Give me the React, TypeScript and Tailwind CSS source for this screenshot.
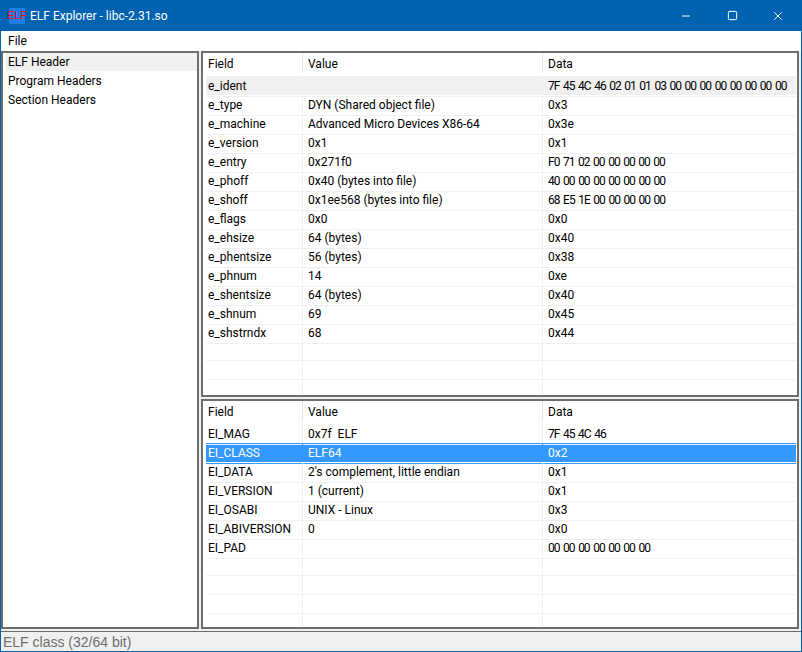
import { Minus, Square, X } from 'lucide-react'

const FONT = "font-['Roboto','Noto_Sans',sans-serif]"

type Row = [string, string, string]

const headerRows: Row[] = [
	['e_ident', '', '7F 45 4C 46 02 01 01 03 00 00 00 00 00 00 00 00'],
	['e_type', 'DYN (Shared object file)', '0x3'],
	['e_machine', 'Advanced Micro Devices X86-64', '0x3e'],
	['e_version', '0x1', '0x1'],
	['e_entry', '0x271f0', 'F0 71 02 00 00 00 00 00'],
	['e_phoff', '0x40 (bytes into file)', '40 00 00 00 00 00 00 00'],
	['e_shoff', '0x1ee568 (bytes into file)', '68 E5 1E 00 00 00 00 00'],
	['e_flags', '0x0', '0x0'],
	['e_ehsize', '64 (bytes)', '0x40'],
	['e_phentsize', '56 (bytes)', '0x38'],
	['e_phnum', '14', '0xe'],
	['e_shentsize', '64 (bytes)', '0x40'],
	['e_shnum', '69', '0x45'],
	['e_shstrndx', '68', '0x44'],
	['', '', ''],
	['', '', ''],
	['', '', ''],
]

const identRows: Row[] = [
	['EI_MAG', '0x7f  ELF', '7F 45 4C 46'],
	['EI_CLASS', 'ELF64', '0x2'],
	['EI_DATA', "2's complement, little endian", '0x1'],
	['EI_VERSION', '1 (current)', '0x1'],
	['EI_OSABI', 'UNIX - Linux', '0x3'],
	['EI_ABIVERSION', '0', '0x0'],
	['EI_PAD', '', '00 00 00 00 00 00 00'],
	['', '', ''],
	['', '', ''],
	['', '', ''],
	['', '', ''],
]

const DataTable = ({
	rows,
	hovered,
	selected,
	className,
}: {
	rows: Row[]
	hovered?: number
	selected?: number
	className: string
}) => (
	<div className={`overflow-hidden border-2 border-[#6e6e6e] bg-white pl-[3px] pr-[1px] ${className}`}>
		<div className="grid h-[23px] grid-cols-[97px_240px_minmax(0,1fr)] pb-[1px] text-black">
			<div className="h-[20px] border-r border-[#e5e5e5] pl-[2px] leading-[22px]">Field</div>
			<div className="h-[20px] border-r border-[#e5e5e5] pl-[5px] leading-[22px]">Value</div>
			<div className="h-[20px] pl-[5px] leading-[22px]">Data</div>
		</div>
		{rows.map((row, i) => {
			const isSelected = i === selected
			const rowColor = isSelected
				? 'bg-[#3399ff] text-white'
				: i === hovered
					? 'bg-[#f0f0f0] text-black'
					: 'text-black'
			const cellBorder = isSelected ? 'border-[#3399ff]' : 'border-[#f0f0f0]'
			// byte dumps: Roboto digits run wider than the original's
			const hexSpacing = row[2].includes(' ') ? 'tracking-[-1px] [word-spacing:1.6px]' : ''
			return (
				<div key={i} className={`grid h-[19px] grid-cols-[97px_240px_minmax(0,1fr)] ${rowColor}`}>
					<div className={`whitespace-nowrap border-r border-b pl-[2px] leading-[20px] ${cellBorder}`}>{row[0]}</div>
					<div className={`whitespace-pre border-r border-b pl-[5px] leading-[20px] ${cellBorder}`}>{row[1]}</div>
					<div className={`whitespace-nowrap border-b pl-[5px] leading-[20px] ${hexSpacing} ${cellBorder}`}>{row[2]}</div>
				</div>
			)
		})}
	</div>
)

export default function App() {
	return (
		<div className={`flex h-[652px] w-[802px] flex-col overflow-hidden border-x border-b border-[#0063b1] bg-[#f0f0f0] text-[12px] ${FONT}`}>
			<div className="flex h-[31px] shrink-0 items-center bg-[#0063b1] text-white">
				<div className="ml-[8px] flex h-[16px] w-[16px] items-center justify-center rounded-[1px] bg-[#1e7fe8] font-['Liberation_Sans',sans-serif] text-[11px] leading-none text-[#ff0000]">
					ELF
				</div>
				<span className="ml-[5px] text-[12px]">ELF Explorer - libc-2.31.so</span>
				<div className="ml-auto flex items-center">
					<div className="flex w-[46px] justify-center">
						<Minus size={12} strokeWidth={1} absoluteStrokeWidth />
					</div>
					<div className="flex w-[46px] justify-center">
						<Square size={11} strokeWidth={1} absoluteStrokeWidth />
					</div>
					<div className="flex w-[46px] justify-center pr-[1px]">
						<X size={14} strokeWidth={1} absoluteStrokeWidth />
					</div>
				</div>
			</div>
			<div className="flex h-[20px] shrink-0 items-center bg-white pl-[7px] text-black">File</div>
			<div className="flex h-[578px] shrink-0 gap-[2px] pr-[2px]">
				<div className="w-[198px] shrink-0 border-2 border-[#6e6e6e] bg-white pl-[3px] text-black">
					<div className="mb-[1px] h-[18px] bg-[#f0f0f0] pl-[2px] leading-[18px]">ELF Header</div>
					<div className="h-[19px] pl-[2px] leading-[19px]">Program Headers</div>
					<div className="h-[19px] pl-[2px] leading-[19px]">Section Headers</div>
				</div>
				<div className="flex min-w-0 flex-1 flex-col gap-[2px]">
					<DataTable rows={headerRows} hovered={0} className="h-[346px]" />
					<DataTable rows={identRows} selected={1} className="h-[230px]" />
				</div>
			</div>
			<div className="mt-[2px] flex flex-1 items-center border-t border-[#6e6e6e] pl-[2px] font-['Liberation_Sans',sans-serif] text-[14px] text-[#6d6d6d]">
				ELF class (32/64 bit)
			</div>
		</div>
	)
}
